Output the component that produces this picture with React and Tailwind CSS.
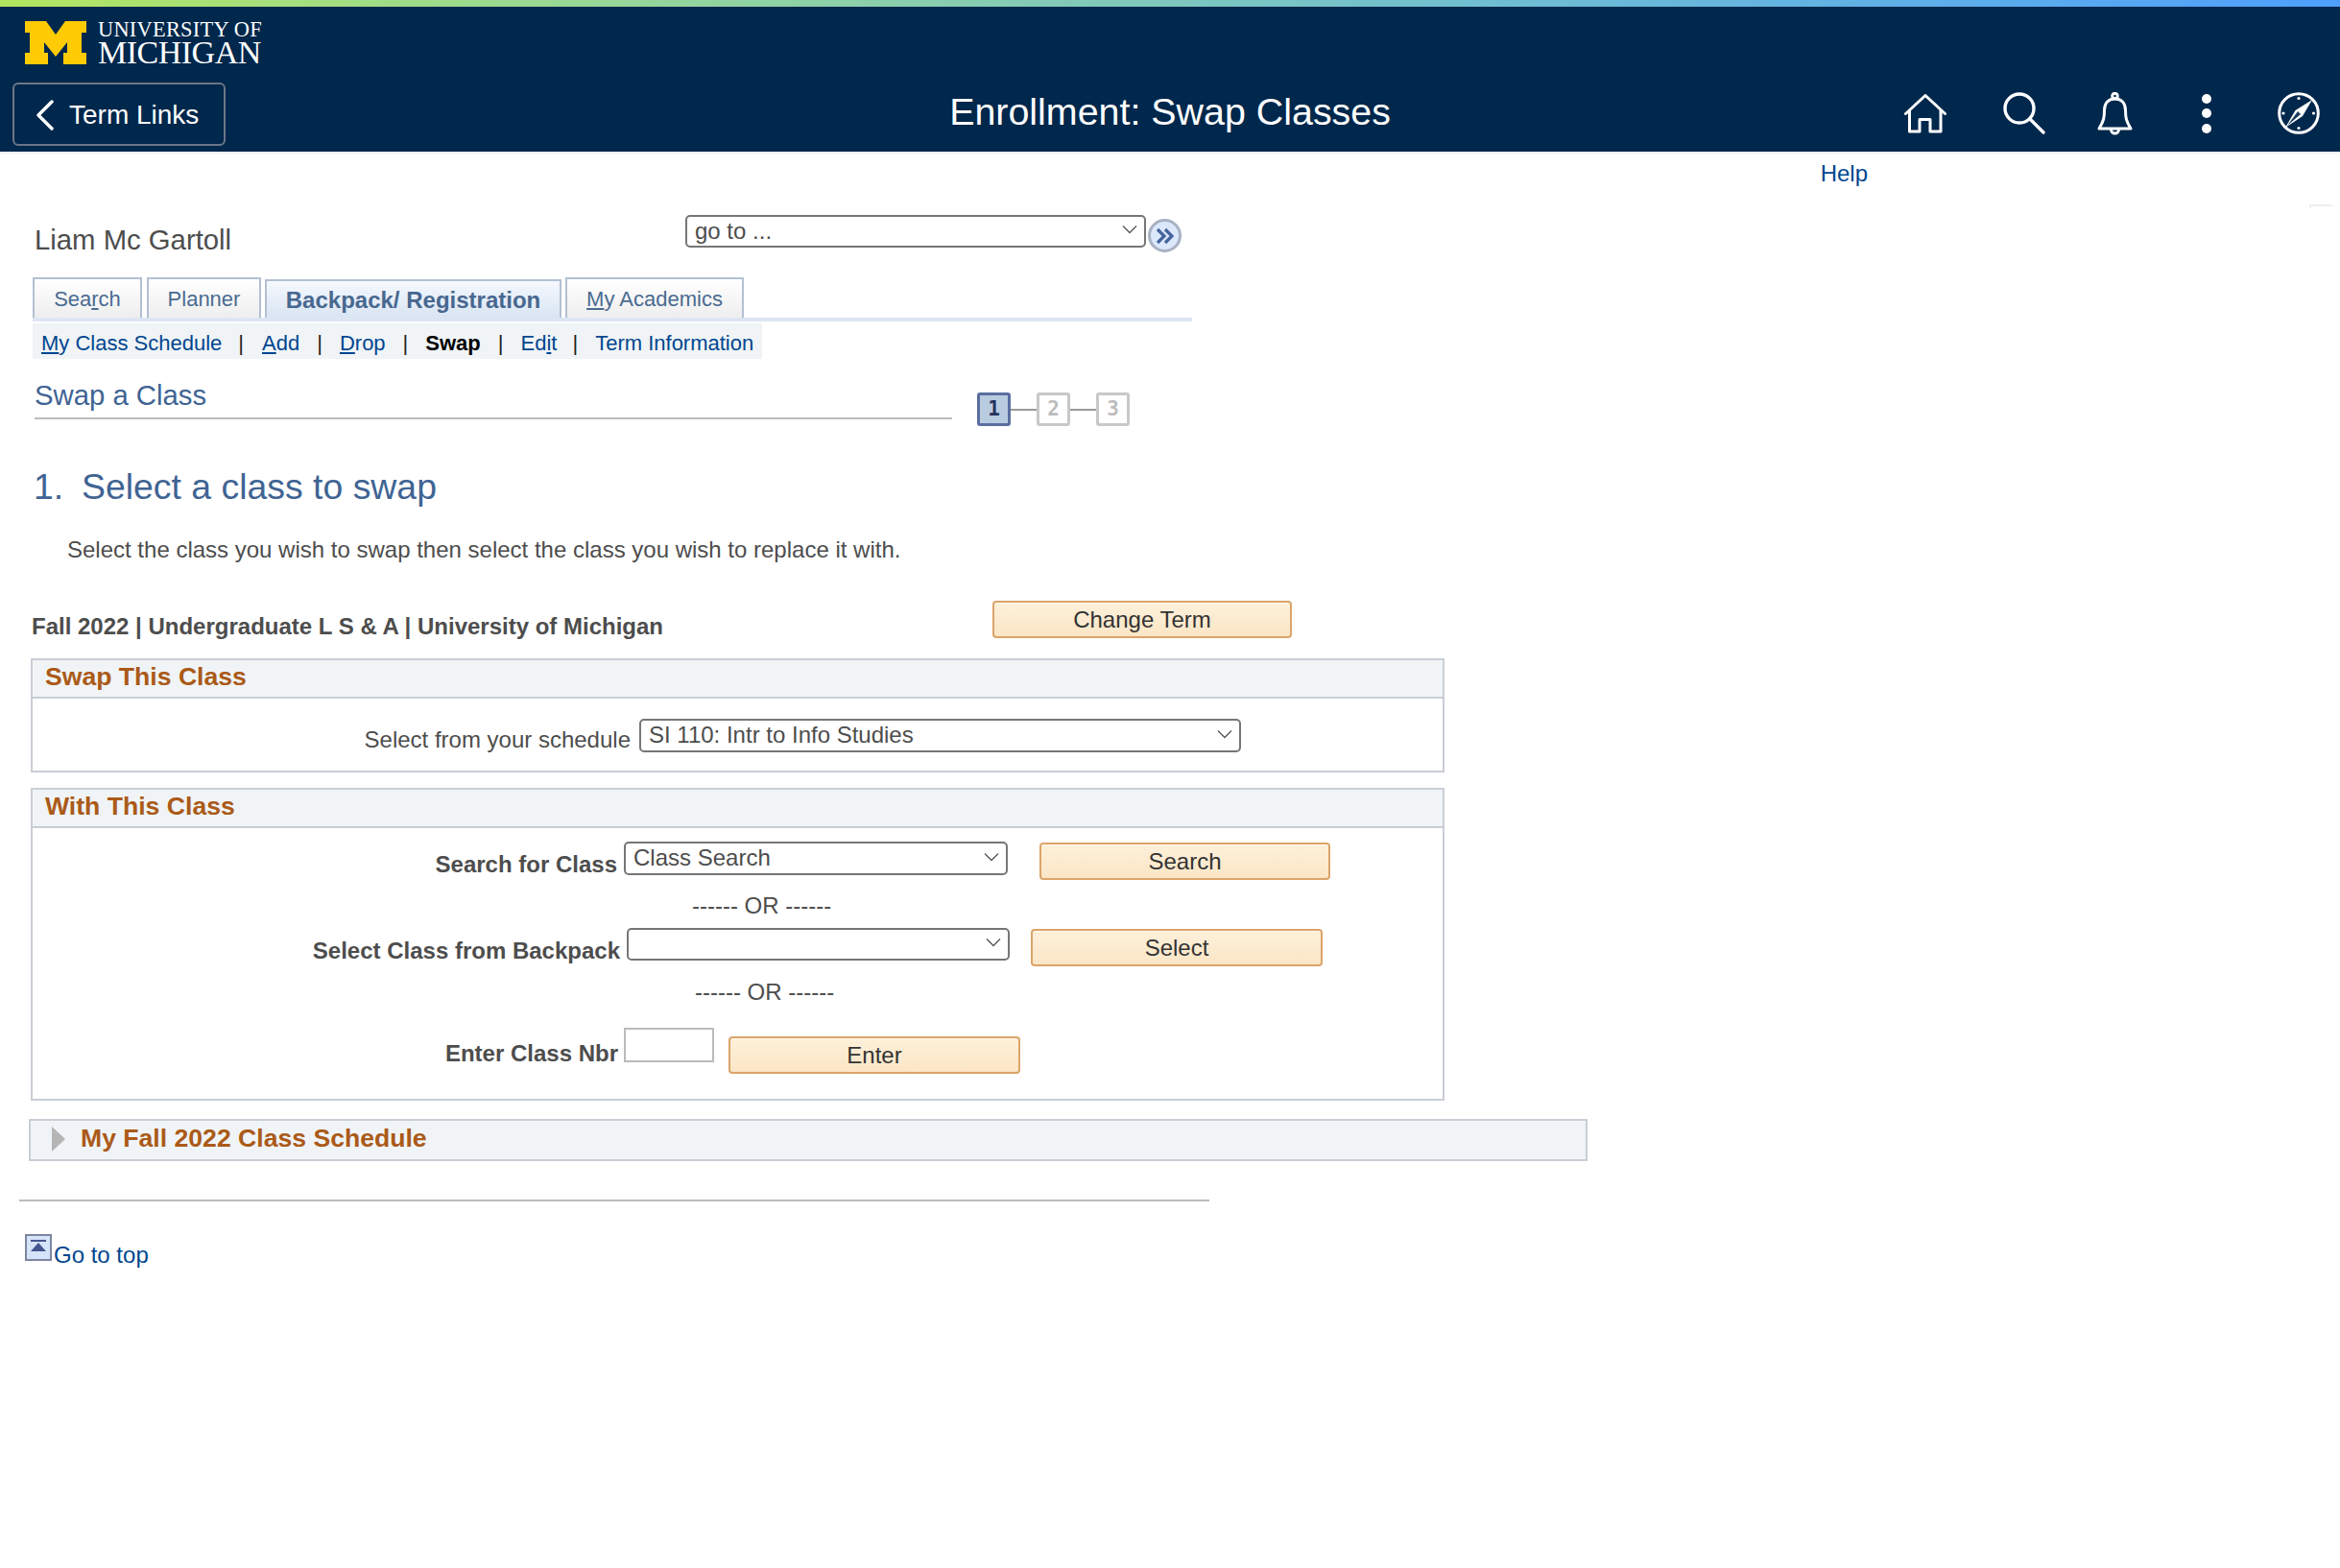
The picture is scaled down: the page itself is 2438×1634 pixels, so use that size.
import React from "react";

const Chevron = ({ className = "" }) => (
  <svg viewBox="0 0 16 10" className={"w-[16px] h-[10px] " + className} fill="none" stroke="#555" strokeWidth="1.3">
    <path d="M1 1.5 L8 8.5 L15 1.5" />
  </svg>
);

const Select = ({ w, h = "h-[35px]", children, className = "" }) => (
  <div className={`${w} ${h} ${className} shrink-0 flex items-center justify-between border-2 border-[#767676] rounded-[5px] pl-[8px] pr-[7px] bg-white text-[24px] leading-[28px] text-[#4d4d4d]`}>
    <span className="-mt-[1px]">{children}</span>
    <Chevron className="-mt-[4px]" />
  </div>
);

const Btn = ({ w, children, className = "" }) => (
  <div className={`${w} ${className} h-[39px] shrink-0 flex items-center justify-center rounded-[4px] border-2 border-[#dca46a] bg-linear-to-b from-[#fdf0da] to-[#fbe6c6] shadow-[inset_0_1px_0_#fff9ef] text-[24px] text-[#333]`}>
    {children}
  </div>
);

const Sep = () => <span className="text-[#222] font-normal">|</span>;

const Tab = ({ w, active, children }) => (
  <div className={`${w} ${active ? "h-[40px] from-[#f5f8fe] to-[#d9e5f3] font-bold text-[24px] text-[#48688f] pt-[1px]" : "h-[42px] from-white to-[#eeeeee] text-[22px] text-[#4a6b90]"} flex items-center justify-center border-2 border-b-0 border-[#b3c0d2] bg-linear-to-b whitespace-nowrap`}>
    {children}
  </div>
);

const Step = ({ n, active }) => (
  <div className={`w-[35px] h-[35px] flex items-center justify-center rounded-[3px] border-[3px] font-bold text-[21px] ${active ? "bg-[#b9cbdf] border-[#5a6ea0] text-[#25345f]" : "bg-white border-[#c8c8c8] text-[#bdbdbd]"}`} style={{ fontFamily: '"DejaVu Sans Mono", monospace' }}>
    {n}
  </div>
);

const PanelHead = ({ children }) => (
  <div className="h-[40px] bg-[#f0f4f6] border-b-2 border-[#c9ced6] pl-[13px] flex items-center text-[26.6px] font-bold text-[#ab5a18]">
    <span className="-mt-[3px]">{children}</span>
  </div>
);

const Label = ({ w, children, className = "" }) => (
  <div className={`${w} ${className} shrink-0 text-right text-[24px] leading-[28px] text-[#4d4d4d]`}>{children}</div>
);

export default function App() {
  return (
    <div className="w-full min-h-screen bg-white text-[24px] text-[#4d4d4d]" style={{ fontFamily: '"Liberation Sans", Arial, sans-serif' }}>
      <div className="h-[7px] bg-linear-to-r from-[#b2e65e] to-[#4f9ffd]" />
      <header className="h-[153px] bg-[#00274c] border-b-2 border-[#eeeeee]">
        <div className="flex pl-[26px] pt-[15px] h-[79px]">
          <svg viewBox="0 0 64 45" className="w-[64px] h-[45px] shrink-0">
            <path fill="#ffcb05" d="M0 0H22L32 14L42 0H64V12H59V33H64V45H40V33H44V22L32 37L20 22V33H24V45H0V33H5V12H0Z" />
          </svg>
          <div className="ml-[12px] text-white whitespace-nowrap" style={{ fontFamily: '"Liberation Serif", serif' }}>
            <div className="text-[22.4px] leading-[18px] tracking-[0.25px]">UNIVERSITY OF</div>
            <div className="text-[34px] leading-[30px] -tracking-[0.5px]">MICHIGAN</div>
          </div>
        </div>
        <div className="grid grid-cols-[1fr_auto_1fr] items-center h-[66px] pl-[21px] pr-[21px]">
          <div className="-ml-[8px] w-[222px] h-[66px] flex items-center border-2 border-[#6a7788] rounded-[6px] text-white text-[28px]">
            <svg viewBox="0 0 20 32" className="w-[20px] h-[32px] ml-[22px] mt-[2px]" fill="none" stroke="white" strokeWidth="3.4" strokeLinecap="round" strokeLinejoin="round">
              <path d="M17 2 L3 16 L17 30" />
            </svg>
            <span className="ml-[15px] mt-[1px]">Term Links</span>
          </div>
          <div className="text-white text-[39.4px] leading-[48px] -mt-[6px]">Enrollment: Swap Classes</div>
          <div className="flex justify-end items-center -mt-[2px]">
            <svg viewBox="0 0 44 41" className="w-[44px] h-[41px]" fill="none" stroke="white" strokeWidth="3" strokeLinecap="round" strokeLinejoin="round">
              <path d="M1.5 20.5 L22 1.5 L42.5 20.5" />
              <path d="M5.5 17 V39 H16 V26.5 H27 V39 H38 V17" />
            </svg>
            <svg viewBox="0 0 44 44" className="w-[44px] h-[44px] ml-[59px]" fill="none" stroke="white" strokeWidth="3.4" strokeLinecap="round">
              <circle cx="17" cy="17" r="15" />
              <path d="M28 28 L42 42" />
            </svg>
            <svg viewBox="0 0 37 45" className="w-[37px] h-[45px] ml-[54px]" fill="none" stroke="white" strokeWidth="3" strokeLinejoin="round">
              <circle cx="18.5" cy="4" r="2.8" />
              <path d="M2 38 C7 30 7.5 26 7.5 19 C7.5 11 12 7 18.5 7 C25 7 29.5 11 29.5 19 C29.5 26 30 30 35 38 Z" />
              <path d="M14.5 39 A4 4 0 0 0 22.5 39" />
            </svg>
            <div className="w-[10px] ml-[72px] flex flex-col gap-[5.5px]">
              <div className="w-[10px] h-[10px] rounded-full bg-white" />
              <div className="w-[10px] h-[10px] rounded-full bg-white" />
              <div className="w-[10px] h-[10px] rounded-full bg-white" />
            </div>
            <svg viewBox="0 0 44 44" className="w-[44px] h-[44px] ml-[69px]">
              <circle cx="22" cy="22" r="20.3" fill="none" stroke="white" strokeWidth="3" />
              <path fill="white" d="M36 8 L26 25 L8 37 L18.5 19 Z" />
              <path fill="#00274c" d="M21 20 L24 23 L10 35 Z" opacity="0.9" />
              <circle cx="22" cy="6.5" r="1.6" fill="white" />
              <circle cx="22" cy="37.5" r="1.6" fill="white" />
              <circle cx="6" cy="22" r="1.6" fill="white" />
              <circle cx="37.5" cy="22" r="1.6" fill="white" />
            </svg>
          </div>
        </div>
      </header>

      <div className="relative mt-[7px] h-[28px] flex justify-end pr-[492px] text-[24px] leading-[28px] text-[#00468f]">
        Help
        <div className="absolute left-[2406px] top-[46px] w-[24px] h-[4px] border-t-2 border-l-2 border-[#eeeeee]" />
      </div>

      <div className="mt-[29px] flex items-start pl-[36px]">
        <div className="w-[678px] mt-[8px] text-[29.3px] leading-[36px] text-[#4d4d4d]">Liam Mc Gartoll</div>
        <Select w="w-[480px]" h="h-[34px]">go to ...</Select>
        <div className="ml-[2px] mt-[4px] w-[35px] h-[35px] rounded-full border-[3px] border-[#a9b2c3] bg-[#dbe7fb] flex items-center justify-center">
          <svg viewBox="0 0 20 18" className="w-[20px] h-[18px]" fill="none" stroke="#45639b" strokeWidth="3.2">
            <path d="M2 2 L9 9 L2 16 M10 2 L17 9 L10 16" />
          </svg>
        </div>
      </div>

      <div className="mt-[21px] pl-[34px] flex items-end">
        <Tab w="w-[114px]"><span>Sea<u>r</u>ch</span></Tab>
        <div className="ml-[5px]"><Tab w="w-[119px]">Planner</Tab></div>
        <div className="ml-[4px]"><Tab w="w-[309px]" active>Backpack/ Registration</Tab></div>
        <div className="ml-[4px]"><Tab w="w-[186px]"><span><u>M</u>y Academics</span></Tab></div>
      </div>
      <div className="ml-[34px] w-[1208px] h-[4px] bg-[#dce6f3]" />

      <div className="mt-[2px] ml-[34px] w-[760px] h-[37px] bg-[#f0f4f6] flex items-center pl-[9px] pt-[5px] text-[22px] leading-[28px] text-[#00468f] whitespace-nowrap">
        <span><u>M</u>y Class Schedule</span>
        <span className="ml-[17px]"><Sep /></span>
        <span className="ml-[19px]"><u>A</u>dd</span>
        <span className="ml-[18px]"><Sep /></span>
        <span className="ml-[18px]"><u>D</u>rop</span>
        <span className="ml-[18px]"><Sep /></span>
        <span className="ml-[18px] font-bold text-black">Swap</span>
        <span className="ml-[18px]"><Sep /></span>
        <span className="ml-[18px]">Ed<u>i</u>t</span>
        <span className="ml-[16px]"><Sep /></span>
        <span className="ml-[18px]">Term Information</span>
      </div>

      <div className="mt-[20px] flex items-start pl-[36px]">
        <div className="w-[956px] h-[43px] border-b-2 border-[#bbbbbb] text-[29.3px] leading-[36px] text-[#3f6493]">Swap a Class</div>
        <div className="ml-[26px] mt-[15px] flex items-center">
          <Step n="1" active />
          <div className="w-[27px] h-[2px] bg-[#999999]" />
          <Step n="2" />
          <div className="w-[27px] h-[2px] bg-[#999999]" />
          <Step n="3" />
        </div>
      </div>

      <div className="mt-[40px] pl-[35px] flex text-[37.4px] leading-[46px] text-[#3f6493]">
        <span className="w-[50px]">1.</span>
        <span>Select a class to swap</span>
      </div>
      <div className="mt-[29px] pl-[70px] text-[24px] leading-[28px] text-[#4d4d4d]">Select the class you wish to swap then select the class you wish to replace it with.</div>

      <div className="mt-[39px] flex items-start pl-[33px]">
        <div className="w-[1001px] mt-[13px] text-[24px] leading-[28px] font-bold text-[#4d4d4d]">Fall 2022 | Undergraduate L S &amp; A | University of Michigan</div>
        <Btn w="w-[312px]">Change Term</Btn>
      </div>

      <section className="mt-[19px] ml-[32px] w-[1473px] h-[119px] border-2 border-[#c9ced6]">
        <PanelHead>Swap This Class</PanelHead>
        <div className="flex items-start pt-[21px]">
          <Label w="w-[623px]" className="mt-[8px]">Select from your schedule</Label>
          <Select w="w-[627px]" className="ml-[9px]">SI 110: Intr to Info Studies</Select>
        </div>
      </section>

      <section className="mt-[16px] ml-[32px] w-[1473px] h-[326px] border-2 border-[#c9ced6]">
        <PanelHead>With This Class</PanelHead>
        <div className="pt-[14px]">
          <div className="flex items-start">
            <Label w="w-[609px]" className="mt-[10px] font-bold">Search for Class</Label>
            <Select w="w-[400px]" className="ml-[7px]">Class Search</Select>
            <Btn w="w-[303px]" className="ml-[33px] mt-[1px]">Search</Btn>
          </div>
          <div className="mt-[13px] pl-[687px] text-[24px] leading-[28px] text-[#4d4d4d]">------ OR ------</div>
          <div className="mt-[9px] flex items-start">
            <Label w="w-[612px]" className="mt-[10px] font-bold">Select Class from Backpack</Label>
            <Select w="w-[399px]" className="ml-[7px]" h="h-[34px]"><span>&nbsp;</span></Select>
            <Btn w="w-[304px]" className="ml-[22px] mt-[1px]">Select</Btn>
          </div>
          <div className="mt-[13px] pl-[690px] text-[24px] leading-[28px] text-[#4d4d4d]">------ OR ------</div>
          <div className="mt-[23px] flex items-start">
            <Label w="w-[610px]" className="mt-[13px] font-bold">Enter Class Nbr</Label>
            <div className="ml-[6px] w-[94px] h-[36px] border-2 border-[#bbbbbb] bg-white shrink-0" />
            <Btn w="w-[304px]" className="ml-[15px] mt-[9px]">Enter</Btn>
          </div>
        </div>
      </section>

      <div className="mt-[19px] ml-[30px] w-[1624px] h-[44px] border-2 border-[#c9ced6] bg-[#f0f4f6] flex items-center text-[26.6px] font-bold text-[#ab5a18]">
        <svg viewBox="0 0 14 26" className="w-[14px] h-[26px] ml-[22px] -mt-[3px]"><path fill="#b5b5b5" d="M0 0 L14 13 L0 26 Z" /></svg>
        <span className="ml-[16px] -mt-[3px]">My Fall 2022 Class Schedule</span>
      </div>

      <div className="mt-[40px] ml-[20px] w-[1240px] h-[2px] bg-[#bbbbbb]" />

      <div className="mt-[34px] ml-[26px] flex items-start">
        <div className="w-[28px] h-[28px] border-2 border-[#7d86a0] bg-[#d6e4fa] flex flex-col items-center pt-[4px] shrink-0">
          <div className="w-[16px] h-[2px] bg-[#45568f]" />
          <svg viewBox="0 0 16 9" className="w-[16px] h-[9px] mt-[1px]"><path fill="#45568f" d="M8 0 L16 9 H0 Z" /></svg>
        </div>
        <span className="ml-[2px] mt-[8px] text-[24px] leading-[28px] text-[#00468f]">Go to top</span>
      </div>
    </div>
  );
}
